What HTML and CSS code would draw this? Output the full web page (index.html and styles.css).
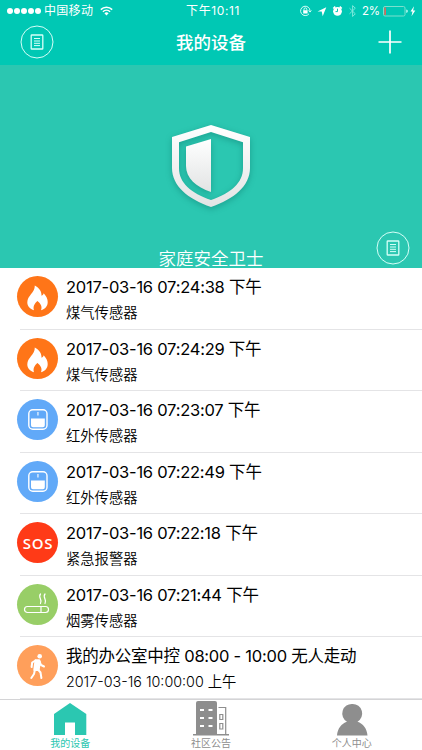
FILE: index.html
```html
<!DOCTYPE html>
<html lang="zh-CN">
<head>
  <meta charset="UTF-8">
  <meta name="viewport" content="width=device-width, initial-scale=1.0">
  <title>我的设备</title>
  <link rel="stylesheet" href="styles.css">
</head>
<body>
  <!-- shared icons -->
  <svg class="defs">
    <symbol id="note" viewBox="0 0 34 34">
      <circle cx="17" cy="17" r="16" fill="none" stroke="#d5fff8" stroke-width="1"/>
      <rect x="11.2" y="10" width="11.6" height="14" rx="0.6" fill="none" stroke="#d5fff8" stroke-width="1.3"/>
      <path d="M14 13.5h6M14 16h6M14 18.3h6M14 20.6h6" stroke="#d5fff8" stroke-width="1"/>
    </symbol>
    <symbol id="fire" viewBox="0 0 41 41">
      <path fill="#fff" d="M17.800 9.500c4.500 2.500 7 6 6.700 10.200 1.300-.4 2-1.300 2.200-2.500 2.600 2.800 4 5.800 4 8.800 0 4.200-2.500 7-6.700 8.200 1.500-3.500-.2-6.500-3.600-9.200-3 2.700-4.700 5.700-3.400 9.200-4-1.200-6.700-4-6.700-8 0-6.500 7.700-9.700 7.500-16.700z"/>
    </symbol>
    <symbol id="infrared" viewBox="0 0 41 41">
      <rect x="11.800" y="10.700" width="18.200" height="19.600" rx="4" fill="none" stroke="#fff" stroke-width="1.400"/>
      <path fill="#fff" d="M14 19.500h13.800v6.700a2 2 0 0 1-2 2H16a2 2 0 0 1-2-2zM20.400 13h1.100v3.500h-1.100z"/>
    </symbol>
    <symbol id="smoke" viewBox="0 0 41 41">
      <g fill="none" stroke="#fff" stroke-width="1.200" stroke-linecap="round">
        <rect x="7.500" y="22.500" width="24" height="6" rx="3"/>
        <path d="M24 22.500v6M23.500 10c-3 3.500 2.500 5.500 0 9.500M28 10c-3 3.500 2.500 5.500 0 9.500"/>
      </g>
    </symbol>
    <symbol id="walk" viewBox="0 0 41 41">
      <circle cx="22.700" cy="11.200" r="2.300" fill="#fff"/>
      <path fill="none" stroke="#fff" stroke-width="2" stroke-linecap="round" stroke-linejoin="round" d="M18.500 15.500l-3.300 2-.6 4.500M22.500 16.500l1.500 3.500 3 1.500M18 24.500l-1 4.500-2.700 4M20.500 24l3 3.500.9 5.500"/>
      <path fill="#fff" stroke="#fff" stroke-width="2" stroke-linejoin="round" d="M18.500 15.200h3.700l.7 1.800-1.300 8h-4.300z"/>
    </symbol>
  </svg>

  <header class="top">
    <div class="status">
      <div class="status-left">
        <span class="signal"><i></i><i></i><i></i><i></i><i></i></span>
        <span class="carrier">中国移动</span>
        <svg class="wifi" width="13" height="10" viewBox="0 0 13 10">
          <path d="M.8 3.600a8.200 8.200 0 0 1 11.400 0M2.900 5.800a5.200 5.200 0 0 1 7.200 0" fill="none" stroke="#fff" stroke-width="1.500"/>
          <path d="M6.500 9.500L4.400 7.300a3 3 0 0 1 4.200 0z" fill="#fff"/>
        </svg>
      </div>
      <span class="time">下午10:11</span>
      <div class="status-right">
        <svg width="120" height="14" viewBox="0 0 120 14">
          <g fill="none" stroke="#d5fff8" stroke-width="1">
            <path d="M10 9.800a4.700 4.700 0 1 1 1-2.800M9.500 6.500l1.500 1.600 1.400-1.600"/>
            <path d="M5 6.500V5.300a1.400 1.400 0 0 1 2.800 0v1.200"/>
          </g>
          <path fill="#fff" d="M4.200 6.300h4.400v3.300H4.200zM18.500 7.400l8.800-4.200-3.600 9-1-4.800z"/>
          <circle cx="38.500" cy="7.300" r="4.400" fill="#fff"/>
          <path d="M34.300 4.500l2-1.900M42.700 4.500l-2-1.900" stroke="#fff" stroke-width="1.700"/>
          <path d="M38.500 4.700v2.900h-2" fill="none" stroke="#00c8b4" stroke-width="1"/>
          <path d="M50.500 4.200l5.800 5.600-2.700 2.700V1.600l2.700 2.600-5.800 5.600" fill="none" stroke="#7be9dc" stroke-width="1"/>
          <rect x="84.500" y="2.500" width="21.500" height="9.500" rx="1.500" fill="none" stroke="#7be0ce"/>
          <path d="M85.300 3.500h1.700v7.500h-1.700z" fill="#d9695c"/>
          <path d="M107.300 5.500v3.300c1-.2 1.400-.8 1.400-1.650s-.4-1.450-1.400-1.650z" fill="#d5fff8"/>
          <path d="M115 2.300l-3.500 5.300h2l-1 4.600 3.800-5.700h-2.200z" fill="#fff"/>
        </svg>
        <span class="percent">2%</span>
      </div>
    </div>
    <div class="nav">
      <svg class="note-btn" width="34" height="34"><use href="#note"/></svg>
      <h1>我的设备</h1>
      <svg class="add-btn" width="24" height="24" viewBox="0 0 24 24">
        <path d="M12 .5v23M.5 12h23" stroke="#fff" stroke-width="1.700"/>
      </svg>
    </div>
  </header>

  <section class="hero">
    <svg class="shield" width="78" height="82" viewBox="0 0 78 82">
      <defs>
        <linearGradient id="metal" x1="0" y1="0" x2="0" y2="1">
          <stop offset="0" stop-color="#fff"/>
          <stop offset="1" stop-color="#e2e4e4"/>
        </linearGradient>
      </defs>
      <path fill="url(#metal)" fill-rule="evenodd" d="M39 0L78 12V43C78 61 62 74 39 82 16 74 0 61 0 43V12zM39 7L7 17.300V43C7 58 19 68 39 75 59 68 71 58 71 43V17.300z"/>
      <path fill="url(#metal)" d="M39 14V67C24 62 14 53 14 41V21.500z"/>
    </svg>
    <p class="hero-title">家庭安全卫士</p>
    <svg class="hero-note" width="34" height="34"><use href="#note"/></svg>
  </section>

  <ul class="list">
    <li>
      <span class="icon gas"><svg><use href="#fire"/></svg></span>
      <div class="info"><h2>2017-03-16 07:24:38 下午</h2><p>煤气传感器</p></div>
    </li>
    <li>
      <span class="icon gas"><svg><use href="#fire"/></svg></span>
      <div class="info"><h2>2017-03-16 07:24:29 下午</h2><p>煤气传感器</p></div>
    </li>
    <li>
      <span class="icon infrared"><svg><use href="#infrared"/></svg></span>
      <div class="info"><h2>2017-03-16 07:23:07 下午</h2><p>红外传感器</p></div>
    </li>
    <li>
      <span class="icon infrared"><svg><use href="#infrared"/></svg></span>
      <div class="info"><h2>2017-03-16 07:22:49 下午</h2><p>红外传感器</p></div>
    </li>
    <li>
      <span class="icon sos">SOS</span>
      <div class="info"><h2>2017-03-16 07:22:18 下午</h2><p>紧急报警器</p></div>
    </li>
    <li>
      <span class="icon smoke"><svg><use href="#smoke"/></svg></span>
      <div class="info"><h2>2017-03-16 07:21:44 下午</h2><p>烟雾传感器</p></div>
    </li>
    <li>
      <span class="icon walk"><svg><use href="#walk"/></svg></span>
      <div class="info"><h2>我的办公室中控 08:00 - 10:00 无人走动</h2><p>2017-03-16 10:00:00 上午</p></div>
    </li>
  </ul>

  <nav class="tabs">
    <a class="tab active">
      <svg width="36" height="36" viewBox="0 0 36 36">
        <path fill="#2bc7b1" d="M18 3L34.300 14V35H23V22.500H13V35H2V14z"/>
      </svg>
      <span>我的设备</span>
    </a>
    <a class="tab">
      <svg width="36" height="36" viewBox="0 0 36 36">
        <path fill="#8e8e8e" fill-rule="evenodd" d="M5 1h17a2 2 0 0 1 2 2V34H36v1.500H0V34h3V3a2 2 0 0 1 2-2zM7 9v2h4V9zm8.500 0v2h4V9zM7 17v2h4v-2zm8.500 0v2h4v-2zM7 25v2h4v-2zm8.500 0v2h4v-2z"/>
        <path fill="none" stroke="#8e8e8e" stroke-width="1.200" d="M25.500 7.500h7.200V35M26.800 14.500h3v5h-3zM26.800 23.500h3v5.500h-3z"/>
      </svg>
      <span>社区公告</span>
    </a>
    <a class="tab">
      <svg width="36" height="36" viewBox="0 0 36 36">
        <path fill="#8e8e8e" d="M18.500 4a9.500 9.500 0 0 1 5 17.700c5.500 2 9.500 6.600 10 13.800H3c.5-7.200 4.500-11.800 10-13.800A9.500 9.500 0 0 1 18.500 4z"/>
      </svg>
      <span>个人中心</span>
    </a>
  </nav>
</body>
</html>
```

FILE: styles.css
```css
* {
  box-sizing: border-box;
}
body {
  display: flex;
  flex-direction: column;
  width: 422px;
  height: 750px;
  margin: 0;
  overflow: hidden;
  background: #fff;
  color: #000;
  font-family: Inter, "Noto Sans CJK SC", sans-serif;
}
h1, h2, p, ul {
  margin: 0;
  padding: 0;
  font-weight: normal;
}
svg {
  display: block;
}
.defs {
  position: absolute;
  width: 0;
  height: 0;
}

/* header */
.top {
  height: 65px;
  background: #00c8b4;
  color: #fff;
}
.status {
  display: grid;
  grid-template-columns: 1fr auto 1fr;
  align-items: center;
  height: 22px;
  padding: 0 3px 0 7px;
  font-size: 12px;
  line-height: 22px;
}
.status-left, .signal {
  display: flex;
  align-items: center;
}
.signal {
  gap: 1px;
}
.signal i {
  width: 6px;
  height: 6px;
  border-radius: 50%;
  background: #fff;
}
.carrier {
  margin-left: 3px;
  letter-spacing: 0.3px;
}
.wifi {
  margin-left: 7px;
}
.time {
  letter-spacing: 0.6px;
}
.status-right {
  display: grid;
  justify-content: end;
  align-items: center;
}
.status-right > * {
  grid-area: 1 / 1;
}
.percent {
  padding-left: 63px;
  font-size: 11.500px;
  letter-spacing: -0.3px;
}
.nav {
  display: grid;
  grid-template-columns: 1fr auto 1fr;
  align-items: center;
  height: 42px;
  padding: 0 20px;
}
.nav h1 {
  font-size: 17.5px;
  font-weight: 500;
  line-height: 40px;
}
.add-btn {
  justify-self: end;
  margin-top: -2px;
}
.note-btn {
  margin-top: -3px;
}

/* hero */
.hero {
  display: grid;
  justify-items: center;
  grid-template-rows: 175px 28px;
  height: 203px;
  background: #2bc7b1;
}
.shield {
  grid-area: 1 / 1;
  margin-top: 60px;
  overflow: visible;
  filter: drop-shadow(0 2px 3px rgba(0, 90, 80, 0.35));
}
.hero-title {
  grid-area: 2 / 1;
  color: #fff;
  font-size: 17.500px;
  font-weight: 350;
  line-height: 37px;
}
.hero-note {
  grid-area: 1 / 1 / 3 / 2;
  place-self: end;
  margin: 0 12px 3px 0;
}

/* events */
.list {
  list-style: none;
  height: 431px;
}
.list li {
  display: flex;
  height: 61.500px;
  padding-left: 17px;
  background: linear-gradient(#e4e4e6, #e4e4e6) 20px 100% / 402px 1px no-repeat;
}
.icon {
  display: flex;
  align-items: center;
  justify-content: center;
  width: 41px;
  height: 41px;
  margin: 8px 8px 0 0;
  border-radius: 50%;
  color: #fff;
}
.icon svg {
  width: 41px;
  height: 41px;
}
.gas {
  background: #ff7518;
}
.infrared {
  background: #61a9f8;
}
.sos {
  padding-left: 1px;
  background: #ff3a17;
  font: 600 15px "Open Sans", sans-serif;
  letter-spacing: 0.8px;
}
.smoke {
  background: #98ce67;
}
.walk {
  background: #ff9f5b;
}
.info {
  padding-top: 7px;
  white-space: nowrap;
}
.info h2 {
  font-size: 16.500px;
  line-height: 25px;
  letter-spacing: -0.24px;
}
.info p {
  font-size: 14.300px;
  font-weight: 350;
  line-height: 25px;
}

/* tab bar */
.tabs {
  display: flex;
  height: 51px;
  border-top: 1px solid #d4d4d6;
  background: #fff;
}
.tab {
  display: flex;
  flex: 1;
  flex-direction: column;
  align-items: center;
  color: #8e8e8e;
  font-size: 10px;
  line-height: 13px;
}
.tab span {
  margin-top: 1px;
}
.active {
  color: #2bc7b1;
}
```
